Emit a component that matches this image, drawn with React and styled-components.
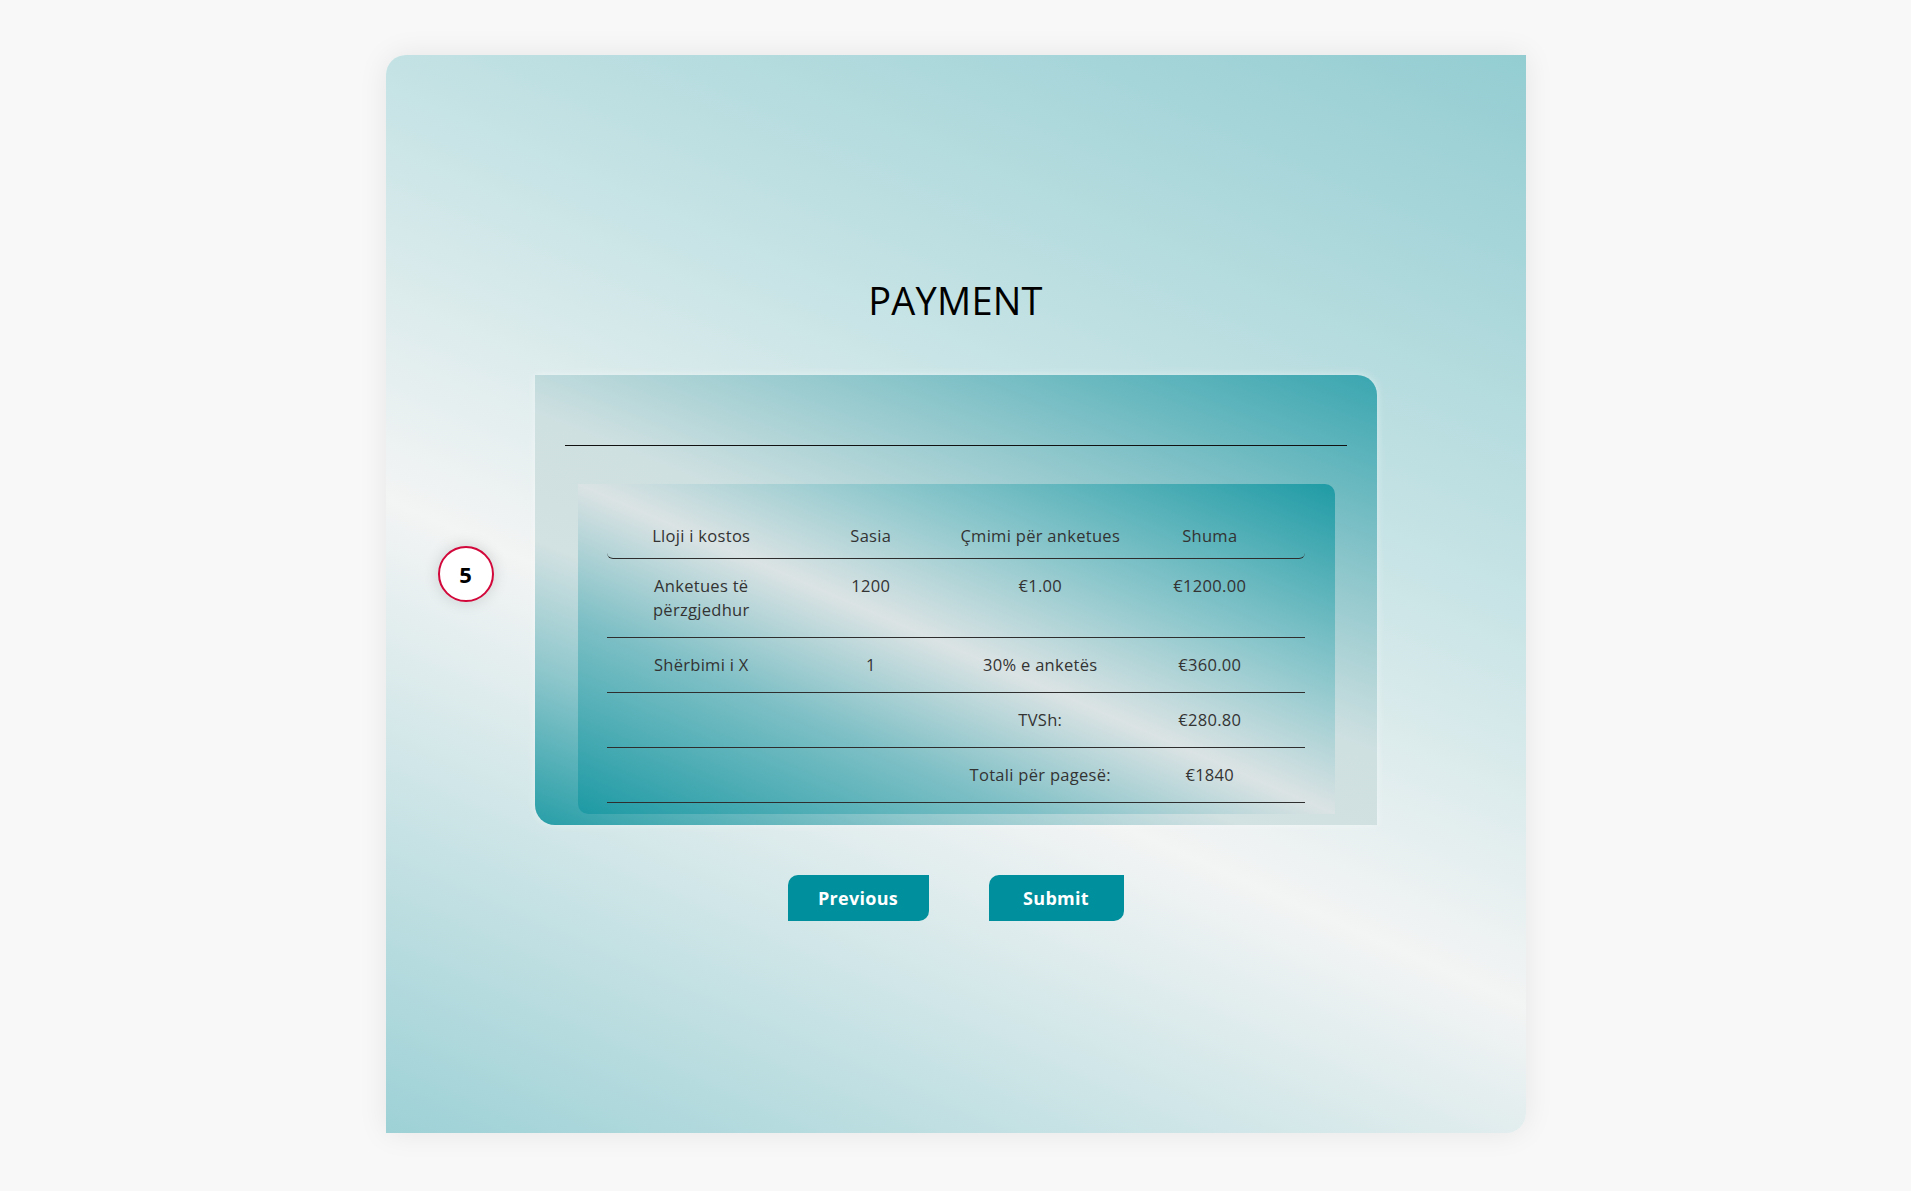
import React from "react";
import styled, { createGlobalStyle } from "styled-components";

const GlobalStyle = createGlobalStyle`
  html, body {
    margin: 0;
    padding: 0;
    background: #f8f8f8;
    font-family: "Open Sans", "Noto Sans", sans-serif;
  }
  * { box-sizing: border-box; }
`;

const Page = styled.div`
  min-height: 100vh;
  display: flex;
  justify-content: center;
  align-items: flex-start;
  padding-top: 55px;
`;

const Card = styled.section`
  position: relative;
  width: 1140px;
  height: 1078px;
  border-radius: 20px 0 20px 0;
  background: linear-gradient(24deg, #9dd1d6 0%, #f3f4f4 40%, #c6e3e5 66%, #93cdd2 100%);
  box-shadow: 0 0 30px rgba(0, 0, 0, 0.08);
  display: flex;
  flex-direction: column;
  align-items: center;
  padding-top: 222px;
`;

const StepBadge = styled.div`
  position: absolute;
  left: 52px;
  top: 491px;
  width: 56px;
  height: 56px;
  border-radius: 50%;
  background: #ffffff;
  border: 2px solid #d2073a;
  box-shadow: 0 0 16px rgba(0, 0, 0, 0.14);
  display: flex;
  align-items: center;
  justify-content: center;
  font-size: 22px;
  font-weight: 700;
  color: #000;
`;

const Title = styled.h1`
  margin: 0;
  font-size: 38px;
  line-height: 46px;
  font-weight: 400;
  color: #000;
  letter-spacing: 0.2px;
`;

const Panel = styled.div`
  margin-top: 52px;
  width: 842px;
  padding: 70px 30px 11px;
  border-radius: 0 20px 0 20px;
  background: linear-gradient(22deg, #279ea7 0%, #8ec7cc 20%, #d2e1e2 36%, #cfe0e1 52%, #8cc6cb 74%, #3aa6b0 100%);
  box-shadow: 0 0 8px rgba(255, 255, 255, 0.45);
`;

const Divider = styled.hr`
  margin: 0 0 38px;
  border: none;
  border-top: 1px solid #111;
  height: 0;
`;

const TableBox = styled.div`
  margin: 0 12px 0 13px;
  padding: 30px 30px 11px 29px;
  border-radius: 0 10px 0 10px;
  background: linear-gradient(to top right, #1d9aa4 0%, #7fc0c6 30%, #dbe3e4 50%, #8cc7cc 70%, #1f9ba5 100%);
`;

const Table = styled.div`
  display: flex;
  flex-direction: column;
  width: 698px;
`;

const Row = styled.div`
  display: grid;
  grid-template-columns: repeat(4, 1fr);
  padding: 0 10px;
  border-bottom: 1px solid #2e2e2e;
  border-radius: ${(p) => (p.$head ? "0 0 6px 6px" : "0")};
`;

const Cell = styled.div`
  padding: ${(p) => (p.$head ? "10px 0" : "15px 0")};
  text-align: center;
  font-size: 16.5px;
  line-height: 24px;
  letter-spacing: 0.3px;
  color: #333;
`;

const ButtonRow = styled.div`
  margin-top: 50px;
  display: flex;
  gap: 60px;
`;

const Button = styled.button`
  width: ${(p) => p.$w}px;
  height: 46px;
  border: none;
  border-radius: 10px 0 10px 0;
  background: #008f9c;
  color: #fff;
  font-family: "Open Sans", "Noto Sans", sans-serif;
  font-size: 18px;
  font-weight: 700;
  letter-spacing: 0.3px;
  cursor: pointer;
  padding: 0;
`;

const rows = [
  { cells: [<>Anketues të<br />përzgjedhur</>, "1200", "€1.00", "€1200.00"] },
  { cells: ["Shërbimi i X", "1", "30% e anketës", "€360.00"] },
  { cells: ["", "", "TVSh:", "€280.80"] },
  { cells: ["", "", "Totali për pagesë:", "€1840"] },
];

export default function App() {
  return (
    <>
      <GlobalStyle />
      <Page>
        <Card>
          <StepBadge>5</StepBadge>
          <Title>PAYMENT</Title>
          <Panel>
            <Divider />
            <TableBox>
              <Table>
                <Row $head>
                  <Cell $head>Lloji i kostos</Cell>
                  <Cell $head>Sasia</Cell>
                  <Cell $head>Çmimi për anketues</Cell>
                  <Cell $head>Shuma</Cell>
                </Row>
                {rows.map((r, i) => (
                  <Row key={i}>
                    {r.cells.map((c, j) => (
                      <Cell key={j}>{c}</Cell>
                    ))}
                  </Row>
                ))}
              </Table>
            </TableBox>
          </Panel>
          <ButtonRow>
            <Button $w={141}>Previous</Button>
            <Button $w={135}>Submit</Button>
          </ButtonRow>
        </Card>
      </Page>
    </>
  );
}
